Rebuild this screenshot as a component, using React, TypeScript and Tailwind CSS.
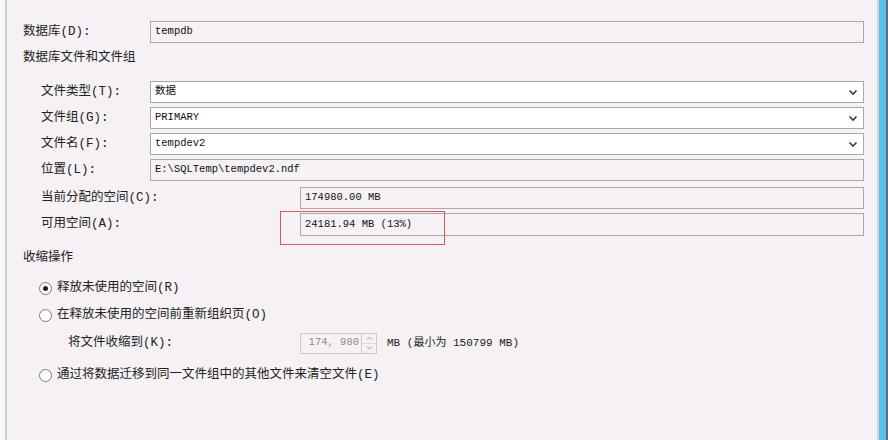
const labelFont = { fontFamily: '"Liberation Mono", "Noto Sans CJK SC", monospace' }

function Chevron() {
  return (
    <svg width="10" height="7" viewBox="0 0 10 7" className="shrink-0">
      <path d="M1.5 1.5 L5 5 L8.5 1.5" fill="none" stroke="#3a3a3a" strokeWidth="1.6" />
    </svg>
  )
}

function Box({ value, white, select }: { value: string; white?: boolean; select?: boolean }) {
  return (
    <div
      className={`flex-1 h-full flex items-center justify-between border border-[#a9a9a9] pl-[4px] pr-[5px] text-[10.5px] text-[#111] ${white ? "bg-white" : "bg-[#f5f1f5]"}`}
    >
      <span className="whitespace-pre">{value}</span>
      {select ? <Chevron /> : null}
    </div>
  )
}

function Radio({ checked, label }: { checked?: boolean; label: string }) {
  return (
    <div className="flex items-center h-[20px] pl-[32px] gap-[5px]">
      <div className="w-[13px] h-[13px] rounded-full border border-[#7a7a7a] bg-white flex items-center justify-center">
        {checked ? <div className="w-[5px] h-[5px] rounded-full bg-[#222]" /> : null}
      </div>
      <span className="text-[12.5px] text-[#222]">{label}</span>
    </div>
  )
}

export default function App() {
  return (
    <div className="w-[888px] h-[440px] flex overflow-hidden" style={labelFont}>
      <div className="w-[5px] bg-[#f8f8f8]" />
      <div className="w-[2px] bg-[#cdcdcd]" />
      <div className="relative flex-1 bg-[#f5f1f5] flex flex-col pt-[21px] pr-[13px] text-[#222]">
        <div className="flex items-center h-[22px] pl-[16px]">
          <div className="w-[127px] text-[12.5px]">数据库(D):</div>
          <Box value="tempdb" />
        </div>

        <div className="mt-[4px] h-[22px] flex items-center pl-[16px] text-[12.5px]">数据库文件和文件组</div>

        <div className="mt-[12px] flex flex-col gap-[4px]">
          <div className="flex items-center h-[22px] pl-[34px]">
            <div className="w-[109px] text-[12.5px]">文件类型(T):</div>
            <Box value="数据" white select />
          </div>
          <div className="flex items-center h-[22px] pl-[34px]">
            <div className="w-[109px] text-[12.5px]">文件组(G):</div>
            <Box value="PRIMARY" white select />
          </div>
          <div className="flex items-center h-[22px] pl-[34px]">
            <div className="w-[109px] text-[12.5px]">文件名(F):</div>
            <Box value="tempdev2" white select />
          </div>
          <div className="flex items-center h-[22px] pl-[34px]">
            <div className="w-[109px] text-[12.5px]">位置(L):</div>
            <Box value="E:\SQLTemp\tempdev2.ndf" />
          </div>
        </div>

        <div className="mt-[6px] flex flex-col gap-[4px]">
          <div className="flex items-center h-[22px] pl-[34px]">
            <div className="w-[259px] text-[12.5px]">当前分配的空间(C):</div>
            <Box value="174980.00 MB" />
          </div>
          <div className="flex items-center h-[23px] pl-[34px]">
            <div className="w-[259px] text-[12.5px]">可用空间(A):</div>
            <Box value="24181.94 MB (13%)" />
          </div>
        </div>

        <div className="mt-[12px] h-[20px] flex items-center pl-[16px] text-[12.5px]">收缩操作</div>

        <div className="mt-[10px]">
          <Radio checked label="释放未使用的空间(R)" />
        </div>
        <div className="mt-[7px]">
          <Radio label="在释放未使用的空间前重新组织页(O)" />
        </div>

        <div className="mt-[7px] flex items-center h-[22px] pl-[61px]">
          <div className="w-[232px] text-[12.5px]">将文件收缩到(K):</div>
          <div className="flex h-[21px]">
            <div className="w-[62px] border border-[#cbcbcb] flex items-center justify-end pr-[2px] text-[10.5px] text-[#8a8a8a]">174, 980</div>
            <div className="w-[15px] flex flex-col border border-l-0 border-[#cbcbcb]">
              <div className="flex-1 flex items-center justify-center border-b border-[#dcdcdc]">
                <svg width="7" height="4" viewBox="0 0 7 4"><path d="M1 3.5 L3.5 1 L6 3.5" fill="none" stroke="#9a9a9a" strokeWidth="1" /></svg>
              </div>
              <div className="flex-1 flex items-center justify-center">
                <svg width="7" height="4" viewBox="0 0 7 4"><path d="M1 0.5 L3.5 3 L6 0.5" fill="none" stroke="#9a9a9a" strokeWidth="1" /></svg>
              </div>
            </div>
          </div>
          <div className="ml-[10px] text-[11px] text-[#222] whitespace-pre">MB (最小为 150799 MB)</div>
        </div>

        <div className="mt-[11px]">
          <Radio label="通过将数据迁移到同一文件组中的其他文件来清空文件(E)" />
        </div>

        <div className="absolute left-[273px] top-[211px] w-[165px] h-[34px] border border-[#e25555]" />
      </div>
      <div className="w-[2px] bg-[#d6d6d6]" />
      <div className="w-[7px] bg-[#58c1ea]" />
      <div className="w-[2px] bg-[#5f6e7a]" />
    </div>
  )
}
